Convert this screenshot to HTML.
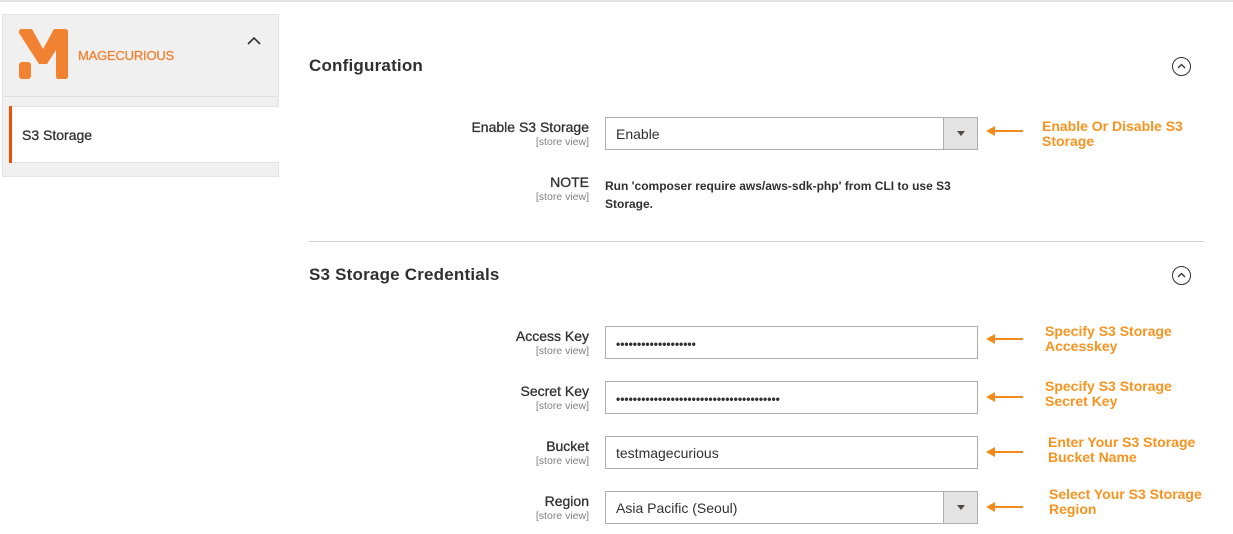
<!DOCTYPE html>
<html><head><style>
*{margin:0;padding:0;box-sizing:border-box}
body{width:1233px;height:534px;background:#fff;font-family:"Liberation Sans",sans-serif;color:#303030;position:relative;overflow:hidden}
.a{position:absolute}
.lbl{position:absolute;right:644px;text-align:right;font-size:14px;color:#303030;white-space:nowrap;-webkit-text-stroke:.3px #303030}
.sv{position:absolute;right:644px;font-size:10.5px;color:#808080;white-space:nowrap}
.inp{position:absolute;left:605px;width:373px;height:33px;border:1px solid #adadad;background:#fff;font-size:14px;padding:8px 10px;color:#303030}
.btn{position:absolute;right:0;top:0;width:34px;height:31px;background:#e3e3e3;border-left:1px solid #adadad}
.btn:after{content:"";position:absolute;left:13px;top:13px;border-left:4px solid transparent;border-right:4px solid transparent;border-top:5px solid #514943}
.ann{position:absolute;color:#f7931e;font-weight:bold;font-size:14px;line-height:15px}
.arr{position:absolute;left:986px;width:38px;height:10px}
.dots{letter-spacing:0px;font-size:12px;font-weight:bold}
h2{position:absolute;left:309px;font-size:17px;font-weight:bold;color:#303030;letter-spacing:.2px}
.circ{position:absolute;left:1172px;width:19px;height:19px;border:1px solid #303030;border-radius:50%}
</style></head><body>
<div class="a" style="left:0;top:0;width:1233px;height:2px;background:#e3e3e3"></div>
<div class="a" style="left:2px;top:14px;width:277px;height:163px;background:#f0f0f0;border:1px solid #e3e3e3"></div>
<div class="a" style="left:3px;top:96px;width:275px;height:1px;background:#e0e0e0"></div>
<div class="a" style="left:9px;top:106px;width:270px;height:57px;background:#fff;border-top:1px solid #e3e3e3;border-bottom:1px solid #e3e3e3"></div>
<div class="a" style="left:9px;top:106px;width:3px;height:57px;background:#eb5202"></div>
<div class="a" style="left:22px;top:127px;font-size:14px;color:#303030;-webkit-text-stroke:.3px #303030">S3 Storage</div>
<svg class="a" style="left:18px;top:28px" width="52" height="52" viewBox="0 0 52 52">
<path d="M3 1 H14 L25 21 L36 1 H47 Q50 1 50 4 V48 Q50 51 47 51 H40 Q38 51 38 48 V22 L29 36 H21 L1 5 Q1 1 3 1 Z" fill="#f08232"/>
<rect x="1" y="34" width="12" height="17" rx="3" fill="#f08232"/>
</svg>
<div class="a" style="left:78px;top:48px;font-size:13px;color:#f08232;letter-spacing:-0.2px;-webkit-text-stroke:.3px #f08232">MAGECURIOUS</div>
<svg class="a" style="left:247px;top:36px" width="14" height="10"><path d="M1 8 L7 2 L13 8" stroke="#303030" stroke-width="1.6" fill="none"/></svg>
<h2 style="top:56px">Configuration</h2>
<div class="circ" style="top:57px"><svg width="17" height="17" style="position:absolute;left:0;top:0"><path d="M5 10 L8.5 6.5 L12 10" stroke="#303030" stroke-width="1.3" fill="none"/></svg></div>
<div class="lbl" style="top:119px">Enable S3 Storage</div>
<div class="sv" style="top:136px">[store view]</div>
<div class="inp" style="top:117px">Enable<div class="btn"></div></div>
<div class="lbl" style="top:174px">NOTE</div>
<div class="sv" style="top:191px">[store view]</div>
<div class="a" style="left:605px;top:177px;font-size:12px;font-weight:bold;line-height:18px;width:370px">Run 'composer require aws/aws-sdk-php' from CLI to use S3 Storage.</div>
<div class="a" style="left:309px;top:241px;width:895px;height:1px;background:#d1d1d1"></div>
<h2 style="top:265px">S3 Storage Credentials</h2>
<div class="circ" style="top:266px"><svg width="17" height="17" style="position:absolute;left:0;top:0"><path d="M5 10 L8.5 6.5 L12 10" stroke="#303030" stroke-width="1.3" fill="none"/></svg></div>

<div class="lbl" style="top:328px">Access Key</div><div class="sv" style="top:345px">[store view]</div>
<div class="inp" style="top:326px"><span class="dots">•••••••••••••••••••</span></div>
<div class="lbl" style="top:383px">Secret Key</div><div class="sv" style="top:400px">[store view]</div>
<div class="inp" style="top:381px"><span class="dots">•••••••••••••••••••••••••••••••••••••••</span></div>
<div class="lbl" style="top:438px">Bucket</div><div class="sv" style="top:455px">[store view]</div>
<div class="inp" style="top:436px">testmagecurious</div>
<div class="lbl" style="top:493px">Region</div><div class="sv" style="top:510px">[store view]</div>
<div class="inp" style="top:491px">Asia Pacific (Seoul)<div class="btn"></div></div>

<svg class="arr" style="top:126px" viewBox="0 0 38 10"><path d="M8 5 H37" stroke="#f08a1a" stroke-width="2"/><path d="M0 5 L9 0 V10Z" fill="#f08a1a"/></svg>
<svg class="arr" style="top:334px" viewBox="0 0 38 10"><path d="M8 5 H37" stroke="#f08a1a" stroke-width="2"/><path d="M0 5 L9 0 V10Z" fill="#f08a1a"/></svg>
<svg class="arr" style="top:392px" viewBox="0 0 38 10"><path d="M8 5 H37" stroke="#f08a1a" stroke-width="2"/><path d="M0 5 L9 0 V10Z" fill="#f08a1a"/></svg>
<svg class="arr" style="top:447px" viewBox="0 0 38 10"><path d="M8 5 H37" stroke="#f08a1a" stroke-width="2"/><path d="M0 5 L9 0 V10Z" fill="#f08a1a"/></svg>
<svg class="arr" style="top:502px" viewBox="0 0 38 10"><path d="M8 5 H37" stroke="#f08a1a" stroke-width="2"/><path d="M0 5 L9 0 V10Z" fill="#f08a1a"/></svg>

<div class="ann" style="left:1042px;top:119px">Enable Or Disable S3<br>Storage</div>
<div class="ann" style="left:1045px;top:324px">Specify S3 Storage<br>Accesskey</div>
<div class="ann" style="left:1045px;top:379px">Specify S3 Storage<br>Secret Key</div>
<div class="ann" style="left:1048px;top:435px">Enter Your S3 Storage<br>Bucket Name</div>
<div class="ann" style="left:1049px;top:487px">Select Your S3 Storage<br>Region</div>
</body></html>
